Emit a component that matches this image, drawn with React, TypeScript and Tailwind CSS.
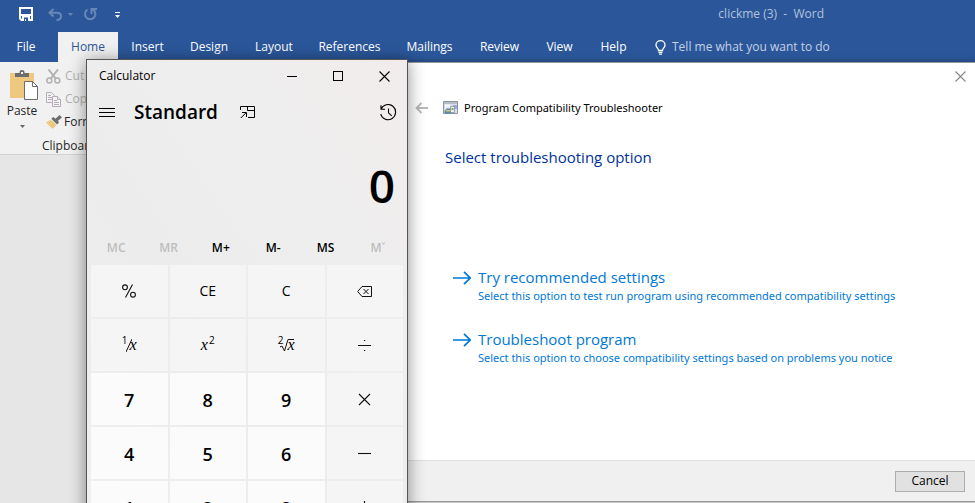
import type { ReactNode } from "react";

const tabs = ["File", "Home", "Insert", "Design", "Layout", "References", "Mailings", "Review", "View", "Help"];

const memoryKeys = [
  { label: "MC", enabled: false },
  { label: "MR", enabled: false },
  { label: "M+", enabled: true },
  { label: "M-", enabled: true },
  { label: "MS", enabled: true },
  { label: "M˅", enabled: false },
];

const options = [
  {
    title: "Try recommended settings",
    text: "Select this option to test run program using recommended compatibility settings",
  },
  {
    title: "Troubleshoot program",
    text: "Select this option to choose compatibility settings based on problems you notice",
  },
];

function SaveIcon() {
  return (
    <svg width="14" height="14" viewBox="0 0 14 14" fill="none">
      <path d="M1 1h12v12H2.500L1 11.500z" stroke="#fff" strokeWidth="2" />
      <path d="M1 7h12v2H1zM3 9h8v5H3z" fill="#fff" />
      <path d="M5 10.500h4V14H7v-2H6v2H5z" fill="#2b579a" />
    </svg>
  );
}

function UndoIcon() {
  return (
    <svg width="14" height="13" viewBox="0 0 14 13" fill="none" stroke="#6886b6" strokeWidth="2">
      <path d="M5.500 1 1.500 4.800l4 3.700M2 4.800h7c2.500 0 4 1.300 4 3.500S11.500 12 8.500 12" />
    </svg>
  );
}

function RedoIcon() {
  return (
    <svg width="14" height="14" viewBox="0 0 14 14" fill="none" stroke="#6886b6" strokeWidth="2">
      <path d="M4.500 2.600A5.200 5.200 0 1 0 10 2.700M8.500 7V2H14" />
    </svg>
  );
}

function Caret({ className }: { className: string }) {
  return (
    <svg width="5" height="3" viewBox="0 0 5 3" className={className}>
      <path d="M0 0h5L2.500 3z" fill="currentColor" />
    </svg>
  );
}

function BulbIcon() {
  return (
    <svg width="11" height="15" viewBox="0 0 11 15" fill="none" stroke="#fff" strokeWidth="1.300">
      <path d="M3.500 10.500C3.500 8.500 1 7.700 1 4.900a4.500 4.200 0 0 1 9 0c0 2.800-2.500 3.600-2.500 5.600z" />
      <path d="M3.500 12.300h4M4 14.200h3" />
    </svg>
  );
}

function PasteIcon() {
  return (
    <svg width="28" height="31" viewBox="0 0 28 31">
      <path d="M0 3h24v25H0z" fill="#edc87e" />
      <path d="M5 3h4.500V2Q9.500 0 12 0t2.500 2V3H19v4H5z" fill="#6d6d6d" />
      <path d="M11 2h2v2h-2z" fill="#f1f1f1" />
      <path d="M14.500 11.500h8l5 5v13h-13z" fill="#fff" stroke="#6d6d6d" />
      <path d="M22.500 11.500v5h5" fill="none" stroke="#6d6d6d" />
    </svg>
  );
}

function CutIcon() {
  return (
    <svg width="15" height="15" viewBox="0 0 15 15" fill="none" stroke="#b1b1b1">
      <path d="m2.500.5 7.500 9.500M12 .5 4.500 10" strokeWidth="2" />
      <circle cx="3.300" cy="11.600" r="2.500" strokeWidth="1.500" />
      <circle cx="11.300" cy="11.600" r="2.500" strokeWidth="1.500" />
    </svg>
  );
}

function CopyIcon() {
  return (
    <svg width="15" height="15" viewBox="0 0 15 15" fill="#f4f1f5" stroke="#b5adb8">
      <path d="M.5.5h5l3 3v7h-8zM2 3.500h3M2 5.500h4M2 7.500h4" />
      <path d="M6.500 4.500h5l3 3v7h-8z" />
      <path d="M11.500 4.500v3h3M8 8.500h3M8 10.500h5M8 12.500h5" />
    </svg>
  );
}

function BrushIcon() {
  return (
    <svg width="16" height="14" viewBox="0 0 16 14">
      <path d="m0 7.500 5-2.700L10.500 10 6.500 14z" fill="#edc87e" />
      <path d="m5.300 3.700 2-1.700 2.200 1.700L13.500 0 16 2.500l-4 3.300 1 1.700-2 2z" fill="#6d6d6d" />
    </svg>
  );
}

function CompatIcon() {
  return (
    <svg width="16" height="14" viewBox="0 0 16 14">
      <path d="M.5.5h14v12H.5z" fill="#d9def0" stroke="#8d949c" />
      <path d="M1 1h13v2H1z" fill="#b8bcc6" />
      <path d="M2 3.500h5v3H2z" fill="#f4f5fb" />
      <path d="M10 4h4v4h-4z" fill="#9fa9e0" />
      <path d="M1.500 12.500V10L4 7.500h3L9 10v2.500z" fill="#5b89a5" />
      <path d="M3 9h4v1.500H3z" fill="#e2c36d" />
      <path d="M7.500 5.500h4v6h-4z" fill="#eef1f4" stroke="#8b9098" strokeWidth=".8" />
      <path d="M8.500 7h2v2h-2z" fill="#6da56b" />
    </svg>
  );
}

function ArrowRight() {
  return (
    <svg width="18" height="14" viewBox="0 0 18 14" fill="none" stroke="#0078d7" strokeWidth="1.700">
      <path d="M0 7h17M11 .8 17.200 7 11 13.200" />
    </svg>
  );
}

function CloseIcon({ color }: { color: string }) {
  return (
    <svg width="11" height="11" viewBox="0 0 11 11" fill="none" stroke={color} strokeWidth="1.100">
      <path d="m.5.5 10 10M10.500.5l-10 10" />
    </svg>
  );
}

function OnTopIcon() {
  return (
    <svg width="15" height="13" viewBox="0 0 15 13" fill="none" stroke="#000">
      <path d="M.5 4V.5h14v11H8M7.500.5v4h7M.8 12l5-5M2 6.500h4.500V11" />
    </svg>
  );
}

function HistoryIcon() {
  return (
    <svg width="17" height="17" viewBox="0 0 17 17" fill="none" stroke="#000" strokeWidth="1.100">
      <path d="M1 5.200a7.600 7.600 0 1 1-.3 5M1 1.200v4h4M8.500 4.500v4.300l3.200 3" />
    </svg>
  );
}

function Percent() {
  return (
    <svg width="14" height="14" viewBox="0 0 14 14" fill="none" stroke="#111" strokeWidth="1.100">
      <circle cx="3" cy="3.300" r="2.400" />
      <circle cx="11" cy="10.700" r="2.400" />
      <path d="M10.500.5 3.500 13.500" />
    </svg>
  );
}

function Backspace() {
  return (
    <svg width="15" height="11" viewBox="0 0 15 11" fill="none" stroke="#111">
      <path d="M5 .5h9.500v10H5l-4.300-5zM6.500 3l5 5M11.500 3l-5 5" />
    </svg>
  );
}

function Operator({ d }: { d: string }) {
  return (
    <svg width="13" height="13" viewBox="0 0 13 13" fill="none" stroke="#111" strokeWidth="1.100">
      <path d={d} />
    </svg>
  );
}

const X = <i className="font-['Liberation_Serif',serif] text-base">x</i>;

const Reciprocal = (
  <span className="flex items-center">
    <sup className="text-[10px]">1</sup>
    <svg width="6" height="13" viewBox="0 0 6 13" stroke="#111" className="-mx-0.5">
      <path d="M6 0 0 13" />
    </svg>
    {X}
  </span>
);

const Square = (
  <span className="flex items-center gap-px">
    {X}
    <sup className="text-[10px]">2</sup>
  </span>
);

const Root = (
  <span className="flex items-center">
    <sup className="text-[10px]">2</sup>
    <span className="relative pl-1">
      <svg width="14" height="13" viewBox="0 0 14 13" fill="none" stroke="#111" className="absolute top-1.5 -left-1">
        <path d="M0 8l2-1 2.500 5L8 .5h6" />
      </svg>
      {X}
    </span>
  </span>
);

type Key = { name: string; face: ReactNode; digit?: boolean };

const keys: Key[] = [
  { name: "Percent", face: <Percent /> },
  { name: "Clear entry", face: "CE" },
  { name: "Clear", face: "C" },
  { name: "Backspace", face: <Backspace /> },
  { name: "Reciprocal", face: Reciprocal },
  { name: "Square", face: Square },
  { name: "Square root", face: Root },
  { name: "Divide by", face: <Operator d="M0 6.500h13M5.900 1.500h1.300M5.900 11.500h1.300" /> },
  { name: "Seven", face: "7", digit: true },
  { name: "Eight", face: "8", digit: true },
  { name: "Nine", face: "9", digit: true },
  { name: "Multiply by", face: <Operator d="m1 1 11 11M12 1 1 12" /> },
  { name: "Four", face: "4", digit: true },
  { name: "Five", face: "5", digit: true },
  { name: "Six", face: "6", digit: true },
  { name: "Minus", face: <Operator d="M0 6.500h13" /> },
  { name: "One", face: "1", digit: true },
  { name: "Two", face: "2", digit: true },
  { name: "Three", face: "3", digit: true },
  { name: "Plus", face: <Operator d="M0 6.500h13M6.500 0v13" /> },
];

function WordWindow() {
  return (
    <div className="flex h-full flex-col">
      <header className="bg-[#2b579a] text-white">
        <div className="flex h-8 items-center pb-1 pl-[19px]">
          <button aria-label="Save"><SaveIcon /></button>
          <button aria-label="Undo" className="ml-[15px] flex items-center gap-1.5 text-[#6886b6]">
            <UndoIcon />
            <Caret className="" />
          </button>
          <button aria-label="Redo" className="ml-2.5"><RedoIcon /></button>
          <button aria-label="Customize Quick Access Toolbar" className="ml-[18px] flex flex-col gap-0.5 pt-0.5">
            <span className="h-px w-[5px] bg-white" />
            <Caret className="" />
          </button>
          <p className="ml-auto pr-[151px] whitespace-pre text-[#b1c2de]">{"clickme (3)  -  Word"}</p>
        </div>
        <nav className="grid h-[30px] grid-cols-[58px_60px_59px_64px_66px_85px_75px_65px_55px_53px_1fr]">
          {tabs.map((tab) => (
            <button
              key={tab}
              className={
                tab === "Home" ? "bg-[#f1f1f1] text-[#2b579a]" : tab === "File" ? "pr-1.5" : ""
              }
            >
              {tab}
            </button>
          ))}
          <button className="flex items-center gap-1.5 pl-[15px] text-[#c3d0e6]">
            <BulbIcon />
            Tell me what you want to do
          </button>
        </nav>
      </header>
      <section className="flex h-[93px] border-b border-[#d2d2d2] bg-[#f1f1f1] text-[#262626]">
        <button className="flex w-11 flex-col items-center pt-2">
          <span className="pl-1"><PasteIcon /></span>
          <span className="leading-5">Paste</span>
          <Caret className="mt-1 text-[#666]" />
        </button>
        <div className="flex flex-col items-start">
          <button className="flex h-[23px] items-center gap-1 pt-1.5 pl-0.5 text-[#b1b1b1]"><CutIcon />Cut</button>
          <button className="flex h-[23px] items-center gap-1 pt-1.5 pl-0.5 text-[#b1b1b1]"><CopyIcon />Copy</button>
          <button className="flex h-[23px] items-center gap-0.5 pt-1.5 pl-0.5"><BrushIcon />Format</button>
          <p className="-ml-0.5 pt-2">Clipboard</p>
        </div>
      </section>
      <main className="flex-1 bg-[#e6e6e6]" />
    </div>
  );
}

function Troubleshooter() {
  return (
    <section className="absolute top-[62px] -right-1 bottom-px left-[380px] flex flex-col border border-[#999] bg-white shadow-[0_0_8px_rgba(0,0,0,0.3)]">
      <div className="flex justify-end pt-2 pr-3">
        <button aria-label="Close"><CloseIcon color="#888" /></button>
      </div>
      <div className="mt-[18px] flex items-center pl-[34px] text-black">
        <button aria-label="Back">
          <svg width="13" height="12" viewBox="0 0 13 12" fill="none" stroke="#b8b8b8" strokeWidth="1.800">
            <path d="M13 6H1.500M6.500 1l-5 5 5 5" />
          </svg>
        </button>
        <span className="ml-[15px]"><CompatIcon /></span>
        <span className="ml-[5px] font-['Noto_Sans',sans-serif] text-[11px] leading-4">
          Program Compatibility Troubleshooter
        </span>
      </div>
      <h1 className="mt-[29px] pl-16 text-[15px] leading-6 text-[#003399]">Select troubleshooting option</h1>
      <div className="mt-[97px] flex flex-col gap-6 pl-[72px]">
        {options.map((option) => (
          <button key={option.title} className="flex items-start gap-[7px] text-left text-[#0078d7]">
            <span className="pt-[5px]"><ArrowRight /></span>
            <span className="flex flex-col">
              <span className="text-[15px] leading-[22px]">{option.title}</span>
              <span className="font-['Noto_Sans',sans-serif] text-[11px] leading-4">{option.text}</span>
            </span>
          </button>
        ))}
      </div>
      <footer className="mt-auto flex h-[41px] items-center justify-end border-t border-[#dfdfdf] bg-[#f0f0f0] pr-[13px]">
        <button className="h-[21px] w-[70px] border border-[#adadad] bg-[#e1e1e1] text-black">Cancel</button>
      </footer>
    </section>
  );
}

function Calculator() {
  return (
    <section className="absolute top-[59px] left-[86px] flex w-[322px] flex-col border border-[#555] bg-[linear-gradient(to_bottom_left,#f1eceb,#eeeeee_30%,#ececec_60%,#efefef)] text-black shadow-[0_2px_16px_rgba(0,0,0,0.45)]">
      <div className="flex h-8 items-center pl-3">
        <h2 className="mr-auto">Calculator</h2>
        <button aria-label="Minimize" className="grid h-8 w-[46px] place-items-center"><span className="h-px w-2.5 bg-black" /></button>
        <button aria-label="Maximize" className="grid h-8 w-[46px] place-items-center"><span className="size-2.5 border border-black" /></button>
        <button aria-label="Close" className="grid h-8 w-[46px] place-items-center"><CloseIcon color="#000" /></button>
      </div>
      <div className="flex h-10 items-center pr-2.5 pl-3">
        <button aria-label="Menu" className="flex flex-col gap-[3px]">
          <span className="h-px w-4 bg-black" />
          <span className="h-px w-4 bg-black" />
          <span className="h-px w-4 bg-black" />
        </button>
        <h3 className="ml-[19px] pt-0.5 text-[19px] font-semibold">Standard</h3>
        <button aria-label="Keep on top" className="ml-[22px]"><OnTopIcon /></button>
        <button aria-label="History" className="ml-auto"><HistoryIcon /></button>
      </div>
      <output className="h-[96px] pt-[19px] pr-3 text-right text-[46px] leading-[68px] font-semibold">0</output>
      <div className="grid h-[37px] grid-cols-6 px-[3px] pt-0.5 font-semibold">
        {memoryKeys.map((key) => (
          <button key={key.label} disabled={!key.enabled} className={key.enabled ? "" : "text-[#bdbdbd]"}>
            {key.label}
          </button>
        ))}
      </div>
      <div className="grid auto-rows-[52px] grid-cols-4 gap-0.5 px-1 pb-1">
        {keys.map((key) => (
          <button
            key={key.name}
            aria-label={key.name}
            className={
              key.digit
                ? "grid place-items-center bg-[#fbfbfb] pt-0.5 text-lg font-semibold"
                : "grid place-items-center bg-[#f5f5f5] text-sm"
            }
          >
            {key.face}
          </button>
        ))}
      </div>
    </section>
  );
}

export default function App() {
  return (
    <div className="relative h-screen overflow-hidden font-['Open_Sans','Noto_Sans',sans-serif] text-xs">
      <WordWindow />
      <Troubleshooter />
      <Calculator />
    </div>
  );
}
